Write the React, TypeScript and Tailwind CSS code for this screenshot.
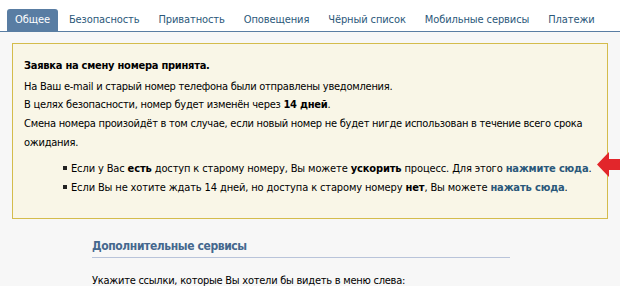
import React from "react";

const tabs = ["Общее", "Безопасность", "Приватность", "Оповещения", "Чёрный список", "Мобильные сервисы", "Платежи"];

export default function App() {
  return (
    <div
      className="w-[620px] h-[286px] overflow-hidden bg-[#f7f7f7] text-[11px] text-black tracking-[-0.25px]"
      style={{ fontFamily: '"DejaVu Sans Condensed", Tahoma, "DejaVu Sans", sans-serif' }}
    >
      <div className="bg-white pt-[9px] pl-[7px] border-b border-[#597da3] flex gap-[3px] whitespace-nowrap tracking-[-0.1px]">
        {tabs.map((t, i) => (
          <div
            key={t}
            className={
              i === 0
                ? "h-[22px] px-[8px] flex items-center rounded-t-[3px] bg-[#597da3] text-white text-[11px]"
                : "h-[22px] px-[8px] flex items-center text-[#2b587a] text-[11px]"
            }
          >
            {t}
          </div>
        ))}
      </div>

      <div className="px-[12px] pt-[11px]">
        <div className="relative border border-[#d4bc4c] bg-[#f9f6e7] pl-[11px] pr-[8px] pt-[13px] pb-[21px] leading-[18.7px]">
          <div className="font-bold mb-[2px]">Заявка на смену номера принята.</div>
          <div>На Ваш e-mail и старый номер телефона были отправлены уведомления.</div>
          <div>
            В целях безопасности, номер будет изменён через <b>14 дней</b>.
          </div>
          <div>
            Смена номера произойдёт в том случае, если новый номер не будет нигде использован в течение всего срока ожидания.
          </div>
          <ul className="mt-[6px] pl-[39px] leading-[19px] whitespace-nowrap tracking-[-0.13px]">
            <li className="flex items-center">
              <span className="w-[4px] h-[4px] bg-[#222] mr-[4px] shrink-0" />
              <span>
                Если у Вас <b>есть</b> доступ к старому номеру, Вы можете <b>ускорить</b> процесс. Для этого{" "}
                <b className="text-[#2b587a]">нажмите сюда</b>.
              </span>
            </li>
            <li className="flex items-center">
              <span className="w-[4px] h-[4px] bg-[#222] mr-[4px] shrink-0" />
              <span>
                Если Вы не хотите ждать 14 дней, но доступа к старому номеру <b>нет</b>, Вы можете{" "}
                <b className="text-[#2b587a]">нажать сюда</b>.
              </span>
            </li>
          </ul>
          <svg className="absolute left-[584px] top-[108px]" width="25" height="26" viewBox="0 0 25 26">
            <polygon points="0,12.5 12,0 12,7 25,7 25,18 12,18 12,25" fill="#e2262b" />
          </svg>
        </div>
      </div>

      <div className="ml-[92px] w-[418px] mt-[19px]">
        <div className="text-[12px] tracking-[-0.4px] font-bold text-[#45688e] leading-[16px] pb-[3px] border-b border-[#b9c4da]">
          Дополнительные сервисы
        </div>
        <div className="mt-[14px] leading-[18px]">Укажите ссылки, которые Вы хотели бы видеть в меню слева:</div>
      </div>
    </div>
  );
}
